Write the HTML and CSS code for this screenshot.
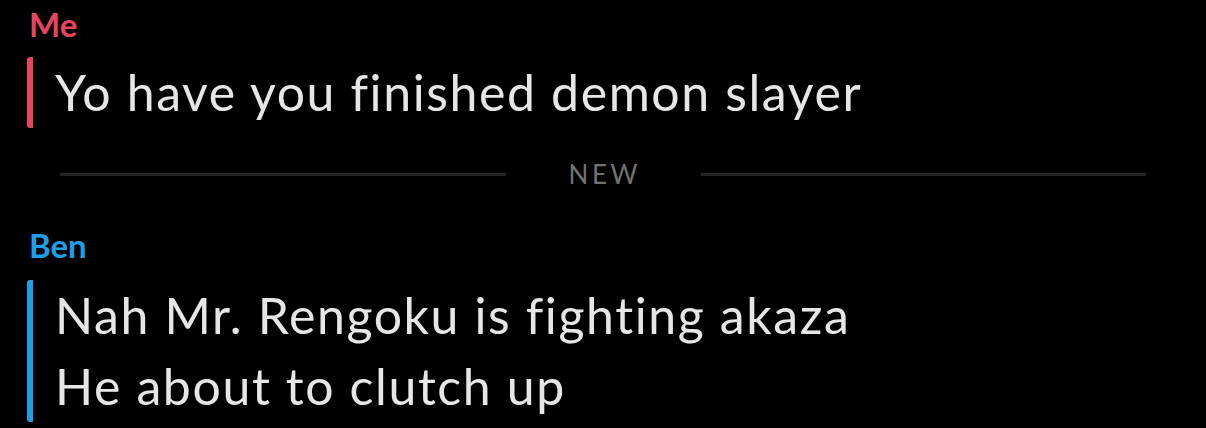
FILE: index.html
```html
<!DOCTYPE html>
<html>
<head>
<meta charset="utf-8">
<link rel="stylesheet" href="styles.css">
</head>
<body>
<div class="chat">
  <div class="group">
    <div class="sender me">Me</div>
    <div class="msg me-bar">
      <div class="line">Yo have you finished demon slayer</div>
    </div>
  </div>
  <div class="divider">
    <span class="rule"></span>
    <span class="label">NEW</span>
    <span class="rule"></span>
  </div>
  <div class="group group-ben">
    <div class="sender ben">Ben</div>
    <div class="msg ben-bar">
      <div class="line">Nah Mr. Rengoku is fighting akaza</div>
      <div class="line">He about to clutch up</div>
    </div>
  </div>
</div>
</body>
</html>
```
FILE: styles.css
```css
html, body {
  margin: 0;
  padding: 0;
  background: #000;
  width: 1206px;
  height: 428px;
  overflow: hidden;
}
.chat {
  font-family: Lato, "Noto Sans", sans-serif;
  padding: 4px 0 0 27px;
  display: flex;
  flex-direction: column;
}
.sender {
  font-weight: 700;
  font-size: 33px;
  line-height: 40px;
  height: 40px;
  padding-left: 2px;
}
.me { color: #e8435f; }
.ben { color: #1f9fe8; }
.msg {
  margin-top: 13px;
  border-left: 6px solid;
  border-radius: 3px;
  padding-left: 22px;
  color: #e6e6e6;
  font-size: 50px;
  letter-spacing: 1.6px;
  font-variant-ligatures: none;
  display: flex;
  flex-direction: column;
}
.me-bar { border-color: #e8435f; }
.ben-bar { border-color: #1f9fe8; }
.line {
  line-height: 71px;
  height: 71px;
}
.divider {
  display: flex;
  align-items: center;
  margin: 24px 0 0 33px;
  width: 1086px;
  height: 44px;
}
.rule {
  flex: 1;
  height: 3px;
  background: #242424;
}
.label {
  width: 195px;
  text-align: center;
  color: #727272;
  font-size: 26px;
  letter-spacing: 3.5px;
  text-indent: 3.5px;
}
.group-ben { margin-top: 29px; }
.group-ben .msg { margin-top: 15px; }
```
